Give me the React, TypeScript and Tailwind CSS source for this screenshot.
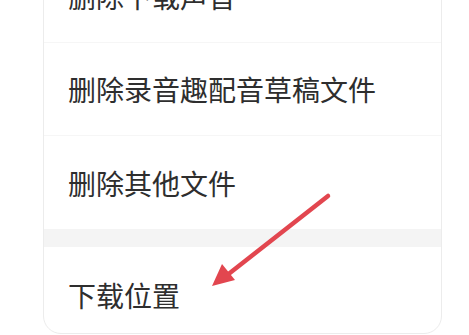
import React from 'react';

const rows = ['删除下载声音', '删除录音趣配音草稿文件', '删除其他文件'];

export default function App() {
  return (
    <div
      className="relative w-[469px] h-[335px] overflow-hidden bg-white"
      style={{ fontFamily: '"Noto Sans CJK SC", "Noto Sans", sans-serif' }}
    >
      <div className="ml-[43px] w-[399px] -mt-[51px] border border-[#ececec] rounded-b-[18px] bg-white overflow-hidden">
        {rows.map((t, i) => (
          <div
            key={t}
            className={`h-[93px] flex items-center pl-[24px] text-[28px] leading-none text-[#2e2e2e] ${
              i < rows.length - 1 ? 'border-b border-[#f6f6f6]' : ''
            }`}
          >
            {t}
          </div>
        ))}
        <div className="h-[18px] bg-[#f4f4f4]" />
        <div className="h-[86px] flex items-center pl-[24px] pt-[10px] text-[28px] leading-none text-[#2e2e2e]">
          下载位置
        </div>
      </div>

      <svg className="absolute inset-0 pointer-events-none" width="469" height="335" viewBox="0 0 469 335">
        <line x1="328" y1="196" x2="226" y2="276" stroke="#e2464f" strokeWidth="4.5" strokeLinecap="round" />
        <polygon points="212,286 222,264 235,280" fill="#e2464f" />
      </svg>
    </div>
  );
}
